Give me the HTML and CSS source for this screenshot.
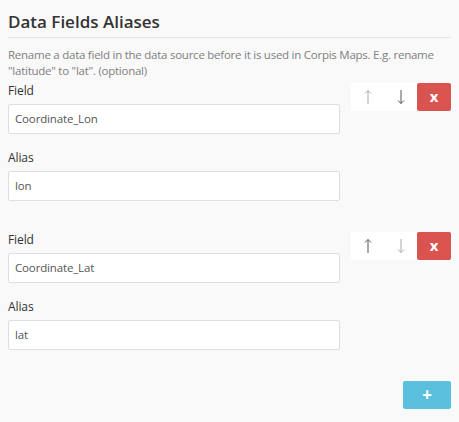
FILE: index.html
```html
<!DOCTYPE html>
<html>
<head>
<meta charset="utf-8">
<link rel="stylesheet" href="styles.css">
</head>
<body>
<div class="panel">
  <h2 class="title">Data Fields Aliases</h2>
  <p class="desc">Rename a data field in the data source before it is used in Corpis Maps. E.g. rename "latitude" to "lat". (optional)</p>

  <div class="alias-row">
    <div class="fields">
      <label class="lbl">Field</label>
      <div class="input">Coordinate_Lon</div>
      <label class="lbl lbl-alias">Alias</label>
      <div class="input">lon</div>
    </div>
    <div class="actions">
      <button class="btn btn-move muted">
        <svg width="8" height="16" viewBox="0 0 8 16"><path d="M4 1.5V15M1 4.5L4 1.5L7 4.5" fill="none" stroke="currentColor" stroke-width="1"/></svg>
      </button>
      <button class="btn btn-move">
        <svg width="8" height="16" viewBox="0 0 8 16"><path d="M4 1V14.5M1 11.5L4 14.5L7 11.5" fill="none" stroke="currentColor" stroke-width="1"/></svg>
      </button>
      <button class="btn btn-del">x</button>
    </div>
  </div>

  <div class="alias-row second">
    <div class="fields">
      <label class="lbl">Field</label>
      <div class="input">Coordinate_Lat</div>
      <label class="lbl lbl-alias">Alias</label>
      <div class="input">lat</div>
    </div>
    <div class="actions">
      <button class="btn btn-move">
        <svg width="8" height="16" viewBox="0 0 8 16"><path d="M4 1.5V15M1 4.5L4 1.5L7 4.5" fill="none" stroke="currentColor" stroke-width="1"/></svg>
      </button>
      <button class="btn btn-move muted">
        <svg width="8" height="16" viewBox="0 0 8 16"><path d="M4 1V14.5M1 11.5L4 14.5L7 11.5" fill="none" stroke="currentColor" stroke-width="1"/></svg>
      </button>
      <button class="btn btn-del">x</button>
    </div>
  </div>

  <div class="footer">
    <button class="btn btn-add">+</button>
  </div>
</div>
</body>
</html>
```

FILE: styles.css
```css
html, body {
  margin: 0;
  padding: 0;
  background: #f9f9f9;
}
body {
  font-family: "Open Sans", "Noto Sans", sans-serif;
  color: #333;
}
.panel {
  padding: 10px 8px 0 8px;
}
.title {
  margin: 0;
  font-size: 17px;
  font-weight: 600;
  line-height: 24px;
  color: #333;
  padding-bottom: 3px;
  border-bottom: 1px solid #e3e3e3;
}
.desc {
  margin: 9px 0 0 0;
  font-size: 11.5px;
  letter-spacing: -0.25px;
  line-height: 16px;
  color: #808080;
}
.alias-row {
  display: flex;
  margin-top: 3px;
}
.alias-row.second {
  margin-top: 30px;
}
.fields {
  width: 332px;
  display: flex;
  flex-direction: column;
}
.lbl {
  font-size: 12px;
  letter-spacing: -0.1px;
  line-height: 18px;
  color: #333;
  margin-bottom: 4px;
}
.lbl-alias {
  margin-top: 15px;
}
.input {
  height: 30px;
  box-sizing: border-box;
  border: 1px solid #dedede;
  border-radius: 2px;
  background: #fff;
  padding: 0 6px;
  font-size: 11.5px;
  letter-spacing: -0.15px;
  line-height: 28px;
  color: #555;
}
.actions {
  flex: 1;
  display: flex;
  justify-content: flex-end;
  align-items: flex-start;
  margin-top: 1px;
}
.btn {
  border: none;
  margin: 0;
  padding: 0;
  height: 28px;
  font-family: inherit;
  display: flex;
  align-items: center;
  justify-content: center;
}
.btn-move {
  width: 33px;
  background: #fff;
  color: #555;
}
.btn-move.muted {
  color: #aaa;
}
.btn-del {
  width: 34px;
  background: #d9534f;
  color: #fff;
  border-radius: 2px;
  font-size: 15px;
  font-weight: 700;
  padding-bottom: 2px;
}
.footer {
  display: flex;
  justify-content: flex-end;
  margin-top: 31px;
}
.btn-add {
  width: 48px;
  background: #5bc0de;
  color: #fff;
  border-radius: 2px;
  font-size: 17px;
  font-weight: 700;
  padding-bottom: 2px;
}
```
